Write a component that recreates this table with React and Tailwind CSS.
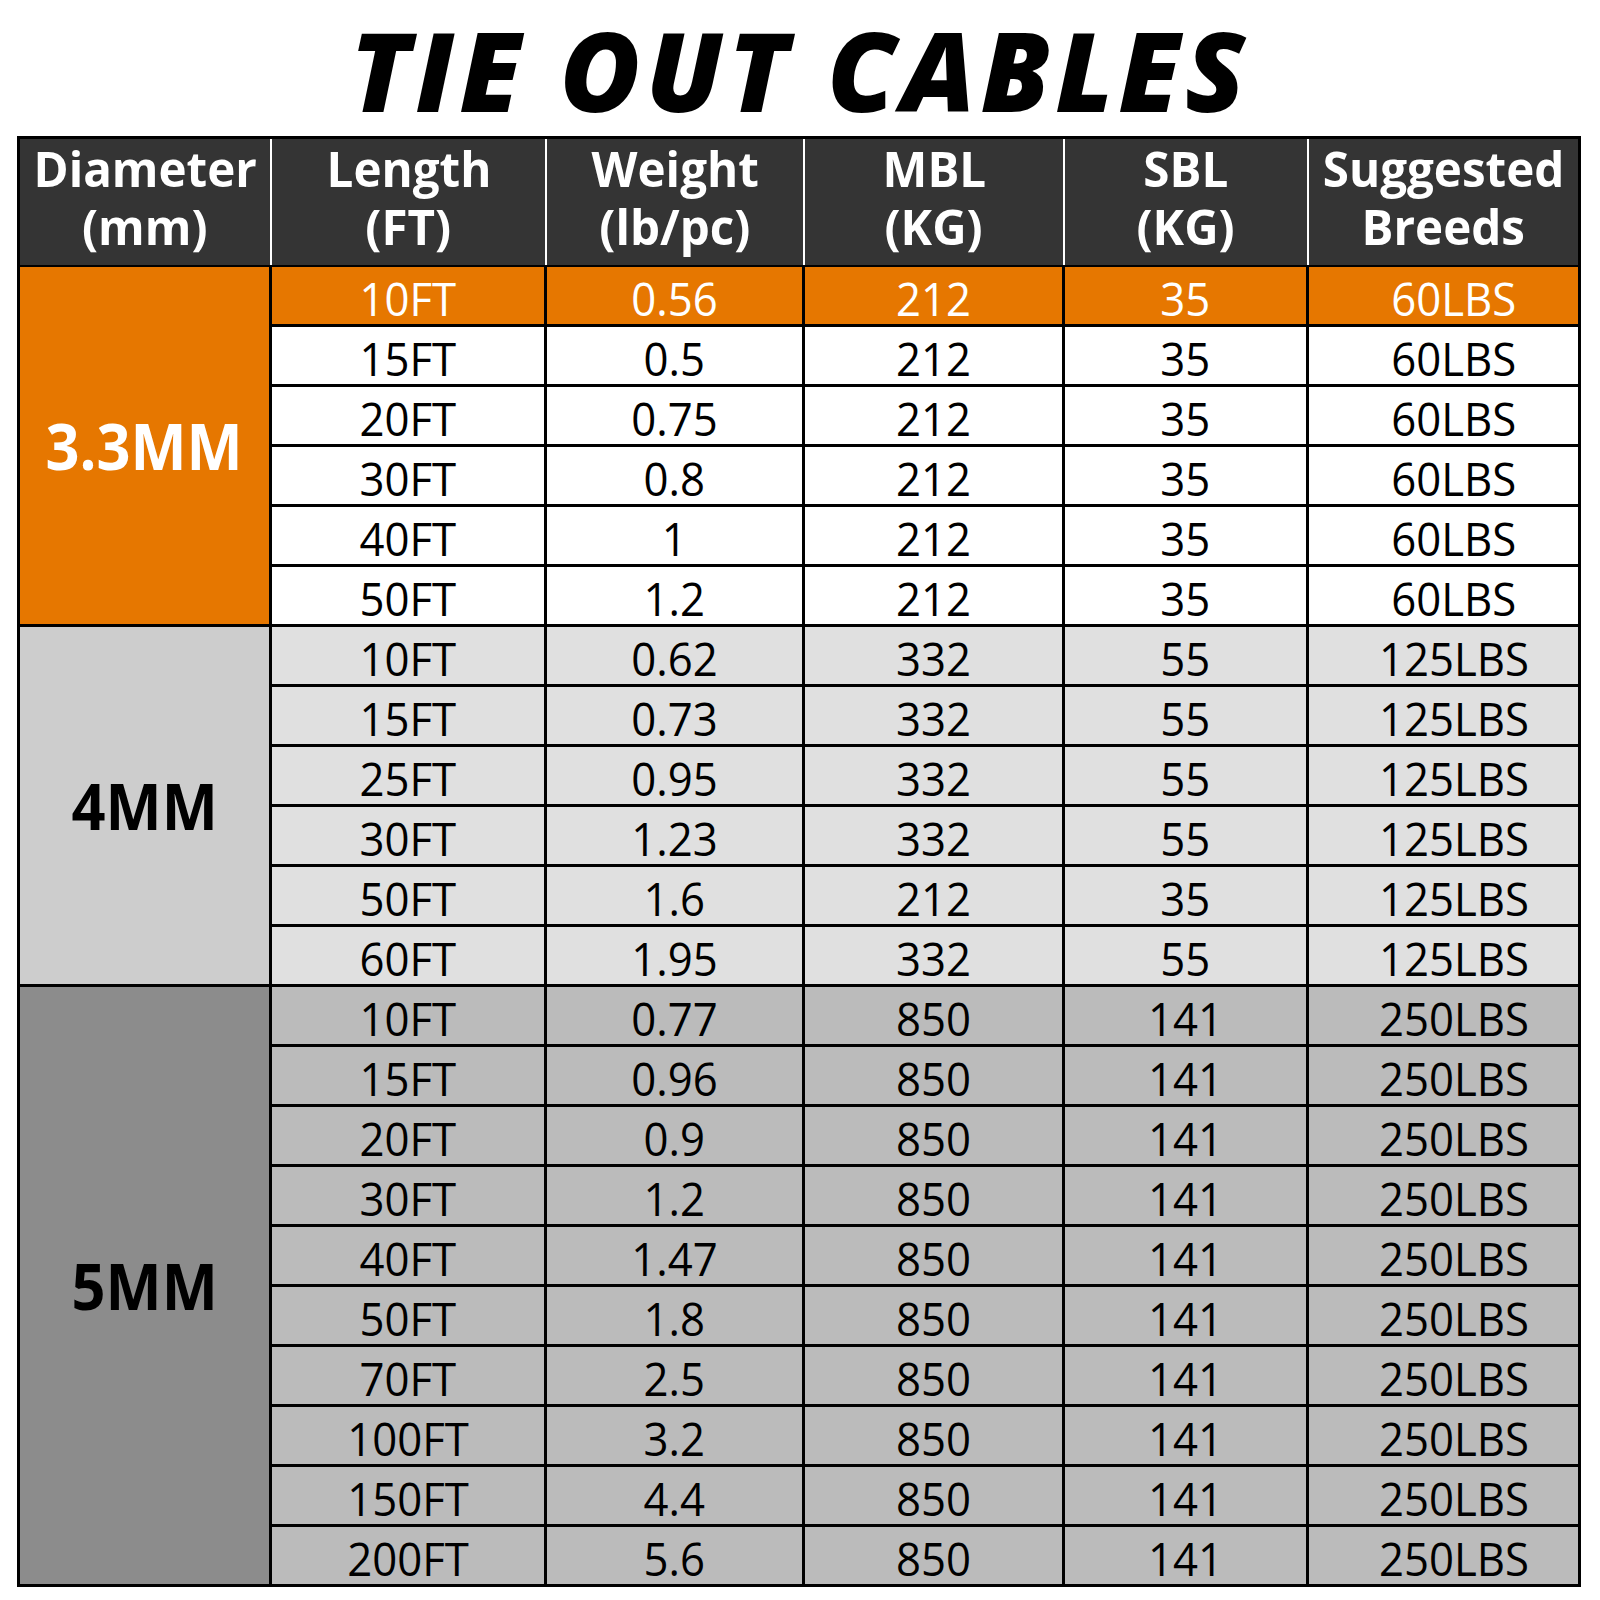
import React from "react";

const groups = [
  {
    label: "3.3MM",
    labelBg: "bg-[#e67700]",
    labelText: "text-white",
    rowBg: "bg-white",
    rows: [
      ["10FT", "0.56", "212", "35", "60LBS"],
      ["15FT", "0.5", "212", "35", "60LBS"],
      ["20FT", "0.75", "212", "35", "60LBS"],
      ["30FT", "0.8", "212", "35", "60LBS"],
      ["40FT", "1", "212", "35", "60LBS"],
      ["50FT", "1.2", "212", "35", "60LBS"],
    ],
    highlightFirst: true,
  },
  {
    label: "4MM",
    labelBg: "bg-[#cdcdcd]",
    labelText: "text-black",
    rowBg: "bg-[#e0e0e0]",
    rows: [
      ["10FT", "0.62", "332", "55", "125LBS"],
      ["15FT", "0.73", "332", "55", "125LBS"],
      ["25FT", "0.95", "332", "55", "125LBS"],
      ["30FT", "1.23", "332", "55", "125LBS"],
      ["50FT", "1.6", "212", "35", "125LBS"],
      ["60FT", "1.95", "332", "55", "125LBS"],
    ],
  },
  {
    label: "5MM",
    labelBg: "bg-[#8c8c8c]",
    labelText: "text-black",
    rowBg: "bg-[#bbbbbb]",
    rows: [
      ["10FT", "0.77", "850", "141", "250LBS"],
      ["15FT", "0.96", "850", "141", "250LBS"],
      ["20FT", "0.9", "850", "141", "250LBS"],
      ["30FT", "1.2", "850", "141", "250LBS"],
      ["40FT", "1.47", "850", "141", "250LBS"],
      ["50FT", "1.8", "850", "141", "250LBS"],
      ["70FT", "2.5", "850", "141", "250LBS"],
      ["100FT", "3.2", "850", "141", "250LBS"],
      ["150FT", "4.4", "850", "141", "250LBS"],
      ["200FT", "5.6", "850", "141", "250LBS"],
    ],
  },
];

const headers = [
  ["Diameter", "(mm)"],
  ["Length", "(FT)"],
  ["Weight", "(lb/pc)"],
  ["MBL", "(KG)"],
  ["SBL", "(KG)"],
  ["Suggested", "Breeds"],
];

// widths of the 5 data columns (col 1 is the diameter label)
const colW = ["w-[275px]", "w-[258px]", "w-[260px]", "w-[244px]", "flex-1 pl-5"];
const headW = ["w-[252px]", "w-[275px]", "w-[258px]", "w-[260px]", "w-[244px]", "flex-1"];

export default function App() {
  return (
    <div
      className="w-[1600px] h-[1600px] bg-white"
      style={{ fontFamily: '"Open Sans", "Noto Sans", sans-serif' }}
    >
      <h1 className="pt-[4px] mb-[2px] h-[134px] text-center text-[110px] leading-[130px] font-extrabold italic text-black tracking-[5px] whitespace-nowrap">
        TIE OUT CABLES
      </h1>

      <div className="ml-[17px] w-[1564px] border-[3px] border-black">
        {/* header */}
        <div className="flex h-[128px] bg-[#343434] border-b-2 border-black">
          {headers.map((h, i) => (
            <div
              key={i}
              className={`${headW[i]} ${i < 5 ? "border-r-2 border-white" : ""} flex flex-col items-center text-white font-bold text-[49px] leading-[58px]`}
            >
              <span className="inline-block scale-x-[0.97] whitespace-nowrap">{h[0]}</span>
              <span className="inline-block scale-x-[0.97] whitespace-nowrap">{h[1]}</span>
            </div>
          ))}
        </div>

        {/* body groups */}
        {groups.map((g, gi) => (
          <div
            key={g.label}
            className={`flex ${gi < groups.length - 1 ? "border-b-[3px] border-black" : ""}`}
          >
            <div
              className={`w-[252px] shrink-0 border-r-[3px] border-black ${g.labelBg} ${g.labelText} flex items-center justify-center font-bold text-[64px]`}
            >
              <span className="inline-block scale-x-[0.93] whitespace-nowrap">{g.label}</span>
            </div>
            <div className="flex-1 flex flex-col">
              {g.rows.map((r, ri) => {
                const hot = g.highlightFirst && ri === 0;
                return (
                  <div
                    key={ri}
                    className={`flex h-[60px] border-b-[3px] border-black last:border-b-0 last:h-[57px] ${
                      hot ? "bg-[#e67700] text-white" : `${g.rowBg} text-black`
                    }`}
                  >
                    {r.map((c, ci) => (
                      <div
                        key={ci}
                        className={`${colW[ci]} ${ci < 4 ? "border-r-[3px] border-black" : ""} text-center font-medium text-[46px] leading-[50px] pt-[6px]`}
                      >
                        <span className="inline-block scale-x-[0.95] whitespace-nowrap">{c}</span>
                      </div>
                    ))}
                  </div>
                );
              })}
            </div>
          </div>
        ))}
      </div>
    </div>
  );
}
